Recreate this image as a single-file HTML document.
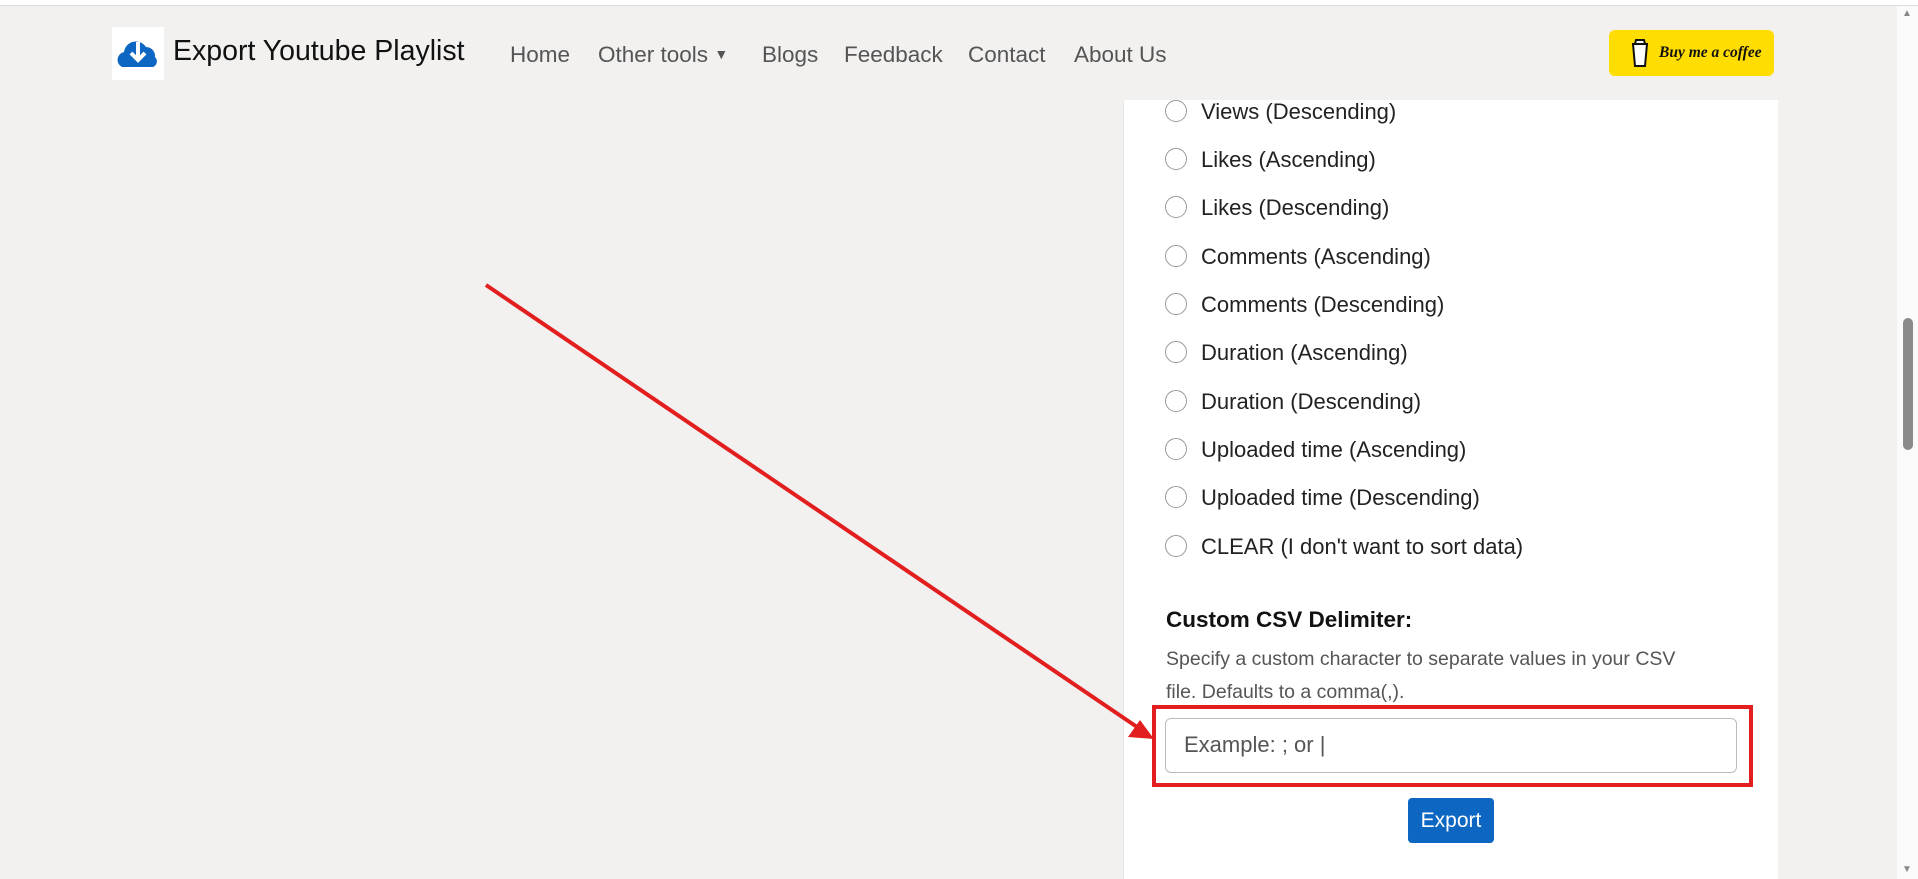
<!DOCTYPE html>
<html><head><style>
html,body{margin:0;padding:0}
body{width:1918px;height:879px;overflow:hidden;background:#f2f1f0;font-family:"Liberation Sans",sans-serif;position:relative}
.top{position:absolute;left:0;top:0;width:1918px;height:5px;background:#fff;border-bottom:1px solid #dcdcdc}
.logo{position:absolute;left:112px;top:27px;width:52px;height:53px;background:#fff}
.title{position:absolute;left:173px;top:35px;font-size:28.5px;color:#111}
.nav{position:absolute;top:42px;font-size:22.5px;color:#555}
.coffee{position:absolute;left:1609px;top:30px;width:165px;height:46px;background:#ffdd00;border-radius:6px;font-family:"Liberation Serif",serif;font-style:italic;font-weight:bold;font-size:15.5px;color:#111}
.card{position:absolute;left:1123px;top:100px;width:654px;height:779px;background:#fff;border-left:1px solid #e6e6e6}
.row{position:absolute;left:1165px;height:24px;font-size:22px;color:#222}
.row i{position:absolute;left:0;top:1px;width:22px;height:22px;border:1px solid #999;border-radius:50%;box-sizing:border-box}
.row span{position:absolute;left:36px;top:0px;white-space:nowrap}
.sb{position:absolute;left:1897px;top:6px;width:21px;height:873px;background:#fafafa}
.thumb{position:absolute;left:1903px;top:318px;width:10px;height:132px;background:#8a8a8a;border-radius:5px}
</style></head><body>
<div class="top"></div>
<div class="logo"><svg width="52" height="53" viewBox="0 0 52 53"><path d="M10 40 a8 8 0 0 1 2-15 a12 12 0 0 1 22-5 a9 9 0 0 1 9 10 a6 6 0 0 1-2 10z" fill="#0d66c2"/><path d="M26 15v17M19 26l7 7 7-7" stroke="#fff" stroke-width="4" fill="none"/></svg></div>
<div class="title">Export Youtube Playlist</div>
<div class="nav" style="left:510px">Home</div>
<div class="nav" style="left:598px">Other tools <span style="font-size:14px;position:relative;top:-3px">▼</span></div>
<div class="nav" style="left:762px">Blogs</div>
<div class="nav" style="left:844px">Feedback</div>
<div class="nav" style="left:968px">Contact</div>
<div class="nav" style="left:1074px">About Us</div>
<div class="coffee"><svg style="position:absolute;left:20px;top:8px" width="22" height="30" viewBox="0 0 22 30"><path d="M3 6h16M4 6l2 22h10l2-22M6 6l1-4h8l1 4" stroke="#111" stroke-width="2" fill="#fff"/></svg><span style="position:absolute;left:50px;top:14px">Buy me a coffee</span></div>
<div class="card"></div>
<svg style="position:absolute;left:0;top:0" width="1918" height="879"><line x1="486" y1="285" x2="1140" y2="729" stroke="#e21e1e" stroke-width="4"/><polygon points="1154,739 1128,737 1140,720" fill="#e21e1e"/></svg>
<div class="row" style="top:99px"><i></i><span>Views (Descending)</span></div>
<div class="row" style="top:147px"><i></i><span>Likes (Ascending)</span></div>
<div class="row" style="top:195px"><i></i><span>Likes (Descending)</span></div>
<div class="row" style="top:244px"><i></i><span>Comments (Ascending)</span></div>
<div class="row" style="top:292px"><i></i><span>Comments (Descending)</span></div>
<div class="row" style="top:340px"><i></i><span>Duration (Ascending)</span></div>
<div class="row" style="top:389px"><i></i><span>Duration (Descending)</span></div>
<div class="row" style="top:437px"><i></i><span>Uploaded time (Ascending)</span></div>
<div class="row" style="top:485px"><i></i><span>Uploaded time (Descending)</span></div>
<div class="row" style="top:534px"><i></i><span>CLEAR (I don't want to sort data)</span></div>
<div style="position:absolute;left:1166px;top:607px;font-size:22.5px;font-weight:bold;color:#111">Custom CSV Delimiter:</div>
<div style="position:absolute;left:1166px;top:643px;width:600px;font-size:19.5px;line-height:33px;color:#555;white-space:nowrap">Specify a custom character to separate values in your CSV<br>file. Defaults to a comma(,).</div>
<div style="position:absolute;left:1152px;top:705px;width:601px;height:82px;border:4px solid #e21e1e;box-sizing:border-box"></div>
<div style="position:absolute;left:1165px;top:718px;width:572px;height:55px;border:1px solid #bbb;border-radius:6px;box-sizing:border-box;background:#fff;font-size:22px;color:#555;padding:13px 0 0 18px">Example: ; or |</div>
<div style="position:absolute;left:1408px;top:798px;width:86px;height:45px;background:#0d66c2;border-radius:4px;color:#fff;font-size:21px;text-align:center;line-height:45px">Export</div>
<div class="sb"></div><div class="thumb"></div>
<div style="position:absolute;left:1902px;top:8px;font-size:10px;color:#888">▲</div>
<div style="position:absolute;left:1902px;top:864px;font-size:10px;color:#888">▼</div>
</body></html>
